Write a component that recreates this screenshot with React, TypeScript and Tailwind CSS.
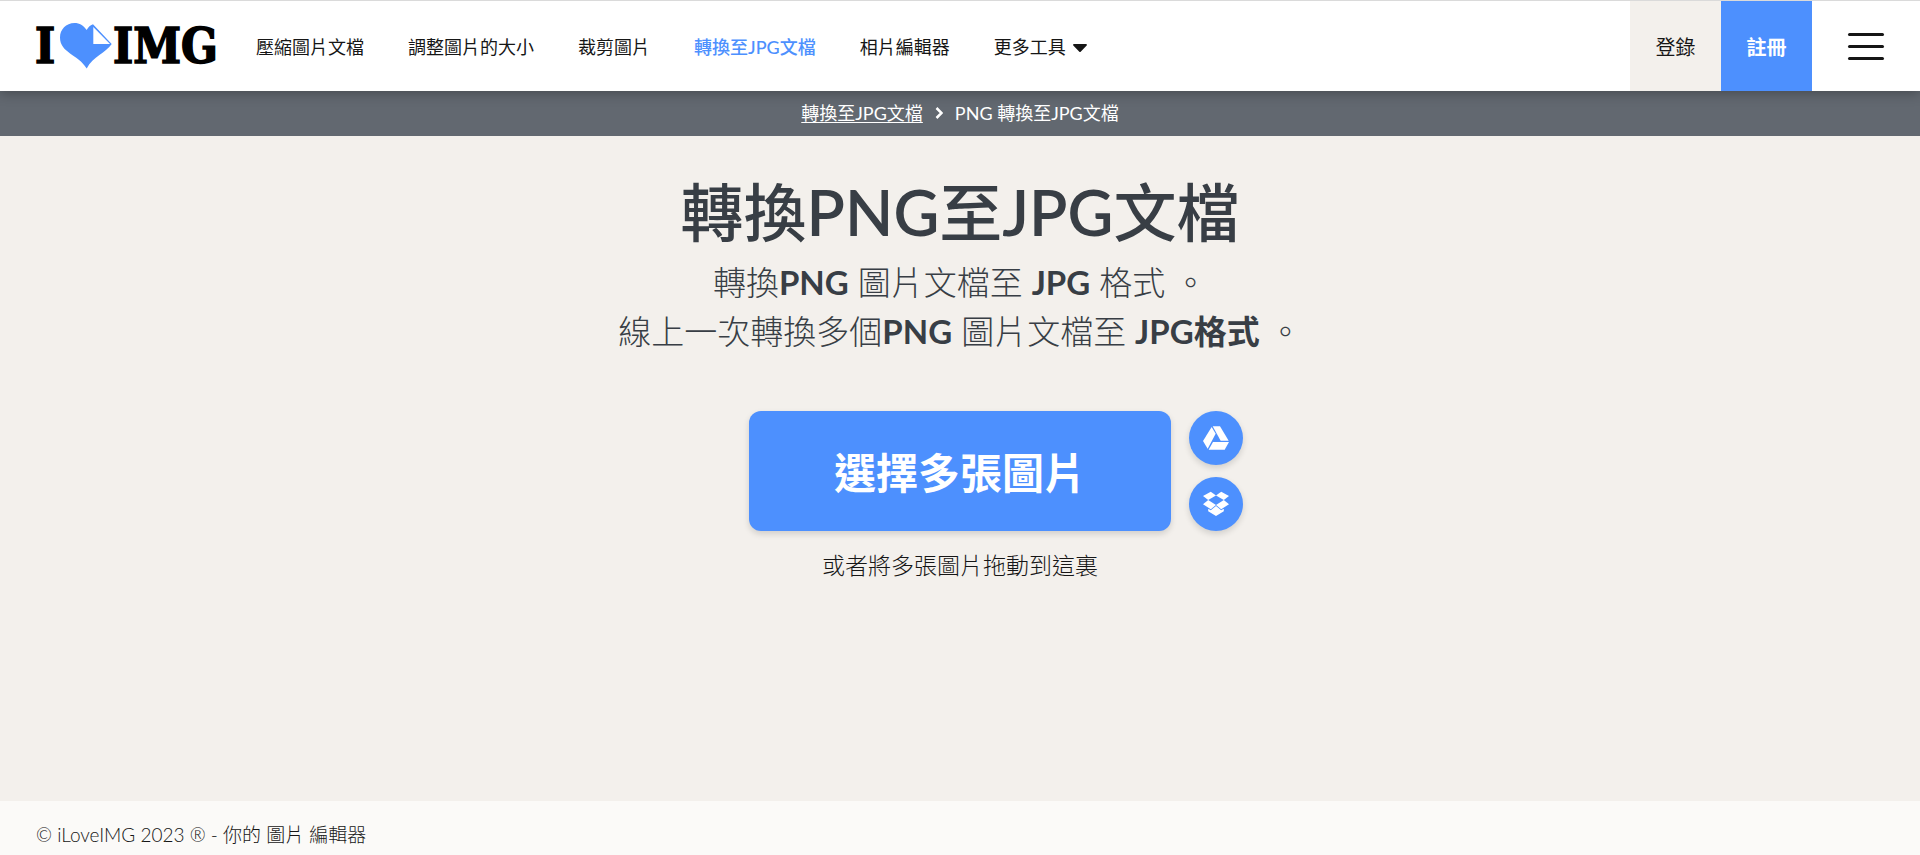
import { FaCaretDown } from "react-icons/fa";

const navLinks = [
  { label: "壓縮圖片文檔", href: "#compress" },
  { label: "調整圖片的大小", href: "#resize" },
  { label: "裁剪圖片", href: "#crop" },
  { label: "轉換至JPG文檔", href: "#convert", active: true },
  { label: "相片編輯器", href: "#editor" },
];

const Logo = () => (
  <svg viewBox="-4 -9 188 64" className="h-16 w-47">
    <g
      fontFamily="'DejaVu Serif Condensed', 'DejaVu Serif', serif"
      fontWeight="700"
      fontSize="48"
      fill="#000"
      stroke="#000"
      strokeWidth="1.5"
    >
      <text x="-1" y="40">
        I
      </text>
      <text x="77" y="40">
        IMG
      </text>
    </g>
    <path
      d="M50.700 7C47.500 2.500 43.500 0 38.500 0C30 0 24 6.500 24 14.500C24 30 42 31 50.700 45.500C57 33 70 30 75.700 21L57 1.300C54 2.500 52 4.500 50.700 7Z"
      fill="#4d90fe"
    />
    <path d="M57.300 4V21H74Z" fill="#fff" />
  </svg>
);

const DriveIcon = () => (
  <svg viewBox="0 0 78 70" className="h-6 w-[26px]" fill="currentColor">
    <path d="M26 2L38 22L14 67L0 44Z" />
    <path d="M29 0H51L77 43H53Z" />
    <path d="M30 47H78L65 70H17Z" />
  </svg>
);

const DropboxIcon = () => (
  <svg viewBox="0 0 80 76" className="h-[26px] w-[26px]" fill="currentColor">
    <path d="M24 0L40 12L16 26L0 13Z" />
    <path d="M56 0L80 13L64 26L40 12Z" />
    <path d="M16 26L40 41L24 54L0 39Z" />
    <path d="M64 26L80 39L56 54L40 41Z" />
    <path d="M40 44L56 57L64 53V60L40 75L16 60V53L24 57Z" />
  </svg>
);

const Header = () => (
  <header className="relative z-10 flex h-[91px] items-stretch border-t border-[#dadada] bg-white shadow-[0_2px_12px_rgba(0,0,0,0.3)]">
    <a href="#home" className="flex items-center pl-8 pr-9">
      <Logo />
    </a>
    <nav className="flex flex-1 items-center gap-11 pt-0.5 text-lg text-[#161616]">
      {navLinks.map((link) => (
        <a
          key={link.label}
          href={link.href}
          className={link.active ? "font-medium text-[#4d90fe]" : ""}
        >
          {link.label}
        </a>
      ))}
      <button type="button" className="flex items-center gap-1">
        更多工具
        <FaCaretDown className="h-6 w-5" />
      </button>
    </nav>
    <div className="flex text-xl">
      <a
        href="#login"
        className="flex w-[91px] items-center justify-center bg-[#f3f0ec] pt-0.5 text-[#161616]"
      >
        登錄
      </a>
      <a
        href="#register"
        className="flex w-[91px] items-center justify-center bg-[#4d90fe] pt-0.5 font-bold text-white"
      >
        註冊
      </a>
      <button
        type="button"
        aria-label="選單"
        className="flex w-27 flex-col items-center justify-center gap-[9px]"
      >
        <span className="h-[3px] w-9 rounded-full bg-[#161616]"></span>
        <span className="h-[3px] w-9 rounded-full bg-[#161616]"></span>
        <span className="h-[3px] w-9 rounded-full bg-[#161616]"></span>
      </button>
    </div>
  </header>
);

const App = () => {
  return (
    <div className="flex min-h-screen flex-col bg-[#f3f0ec] font-[Lato,'Noto_Sans_CJK_TC',sans-serif] text-[#383e45]">
      <Header />
      <div className="flex h-[45px] items-center justify-center gap-3 bg-[#626870] pb-0.5 text-lg text-white">
        <a href="#convert" className="underline underline-offset-2">
          轉換至JPG文檔
        </a>
        <svg
          viewBox="0 0 8 12"
          className="h-3 w-2"
          fill="none"
          stroke="currentColor"
          strokeWidth="2.5"
        >
          <path d="M1.500 1L6.500 6L1.500 11" />
        </svg>
        <span>PNG 轉換至JPG文檔</span>
      </div>

      <main className="flex flex-1 flex-col items-center pt-[38px] text-center">
        <h1 className="text-[63px] font-medium leading-[76px]">
          轉換<span className="font-semibold">PNG</span>至
          <span className="font-semibold">JPG</span>文檔
        </h1>
        <h2 className="mt-2 text-[33px] font-light leading-[49px]">
          轉換<strong className="font-bold">PNG</strong> 圖片文檔至{" "}
          <strong className="font-bold">JPG</strong> 格式 。
          <br />
          線上一次轉換多個<strong className="font-bold">PNG</strong> 圖片文檔至{" "}
          <strong className="font-bold">JPG格式</strong> 。
        </h2>

        <div className="mt-[55px] grid w-full grid-cols-[1fr_auto_1fr] gap-x-[18px]">
          <button
            type="button"
            className="col-start-2 h-30 w-[422px] rounded-xl bg-[#4d90fe] pt-1 text-[42px] font-bold text-white shadow-[0_3px_6px_rgba(0,0,0,0.14)]"
          >
            選擇多張圖片
          </button>
          <div className="flex flex-col justify-between">
            <button
              type="button"
              aria-label="Google Drive"
              className="flex h-[54px] w-[54px] items-center justify-center rounded-full bg-[#4d90fe] text-white shadow-[0_3px_6px_rgba(0,0,0,0.14)]"
            >
              <DriveIcon />
            </button>
            <button
              type="button"
              aria-label="Dropbox"
              className="flex h-[54px] w-[54px] items-center justify-center rounded-full bg-[#4d90fe] text-white shadow-[0_3px_6px_rgba(0,0,0,0.14)]"
            >
              <DropboxIcon />
            </button>
          </div>
        </div>
        <p className="mt-[18px] text-[23px] font-light leading-8 text-[#161616]">
          或者將多張圖片拖動到這裏
        </p>
      </main>

      <footer className="flex h-[54px] items-center bg-[#fbfaf8] px-9 pt-3.5 text-[19px] font-light text-[#161616]">
        © iLoveIMG 2023 ® - 你的 圖片 編輯器
      </footer>
    </div>
  );
};

export default App;
